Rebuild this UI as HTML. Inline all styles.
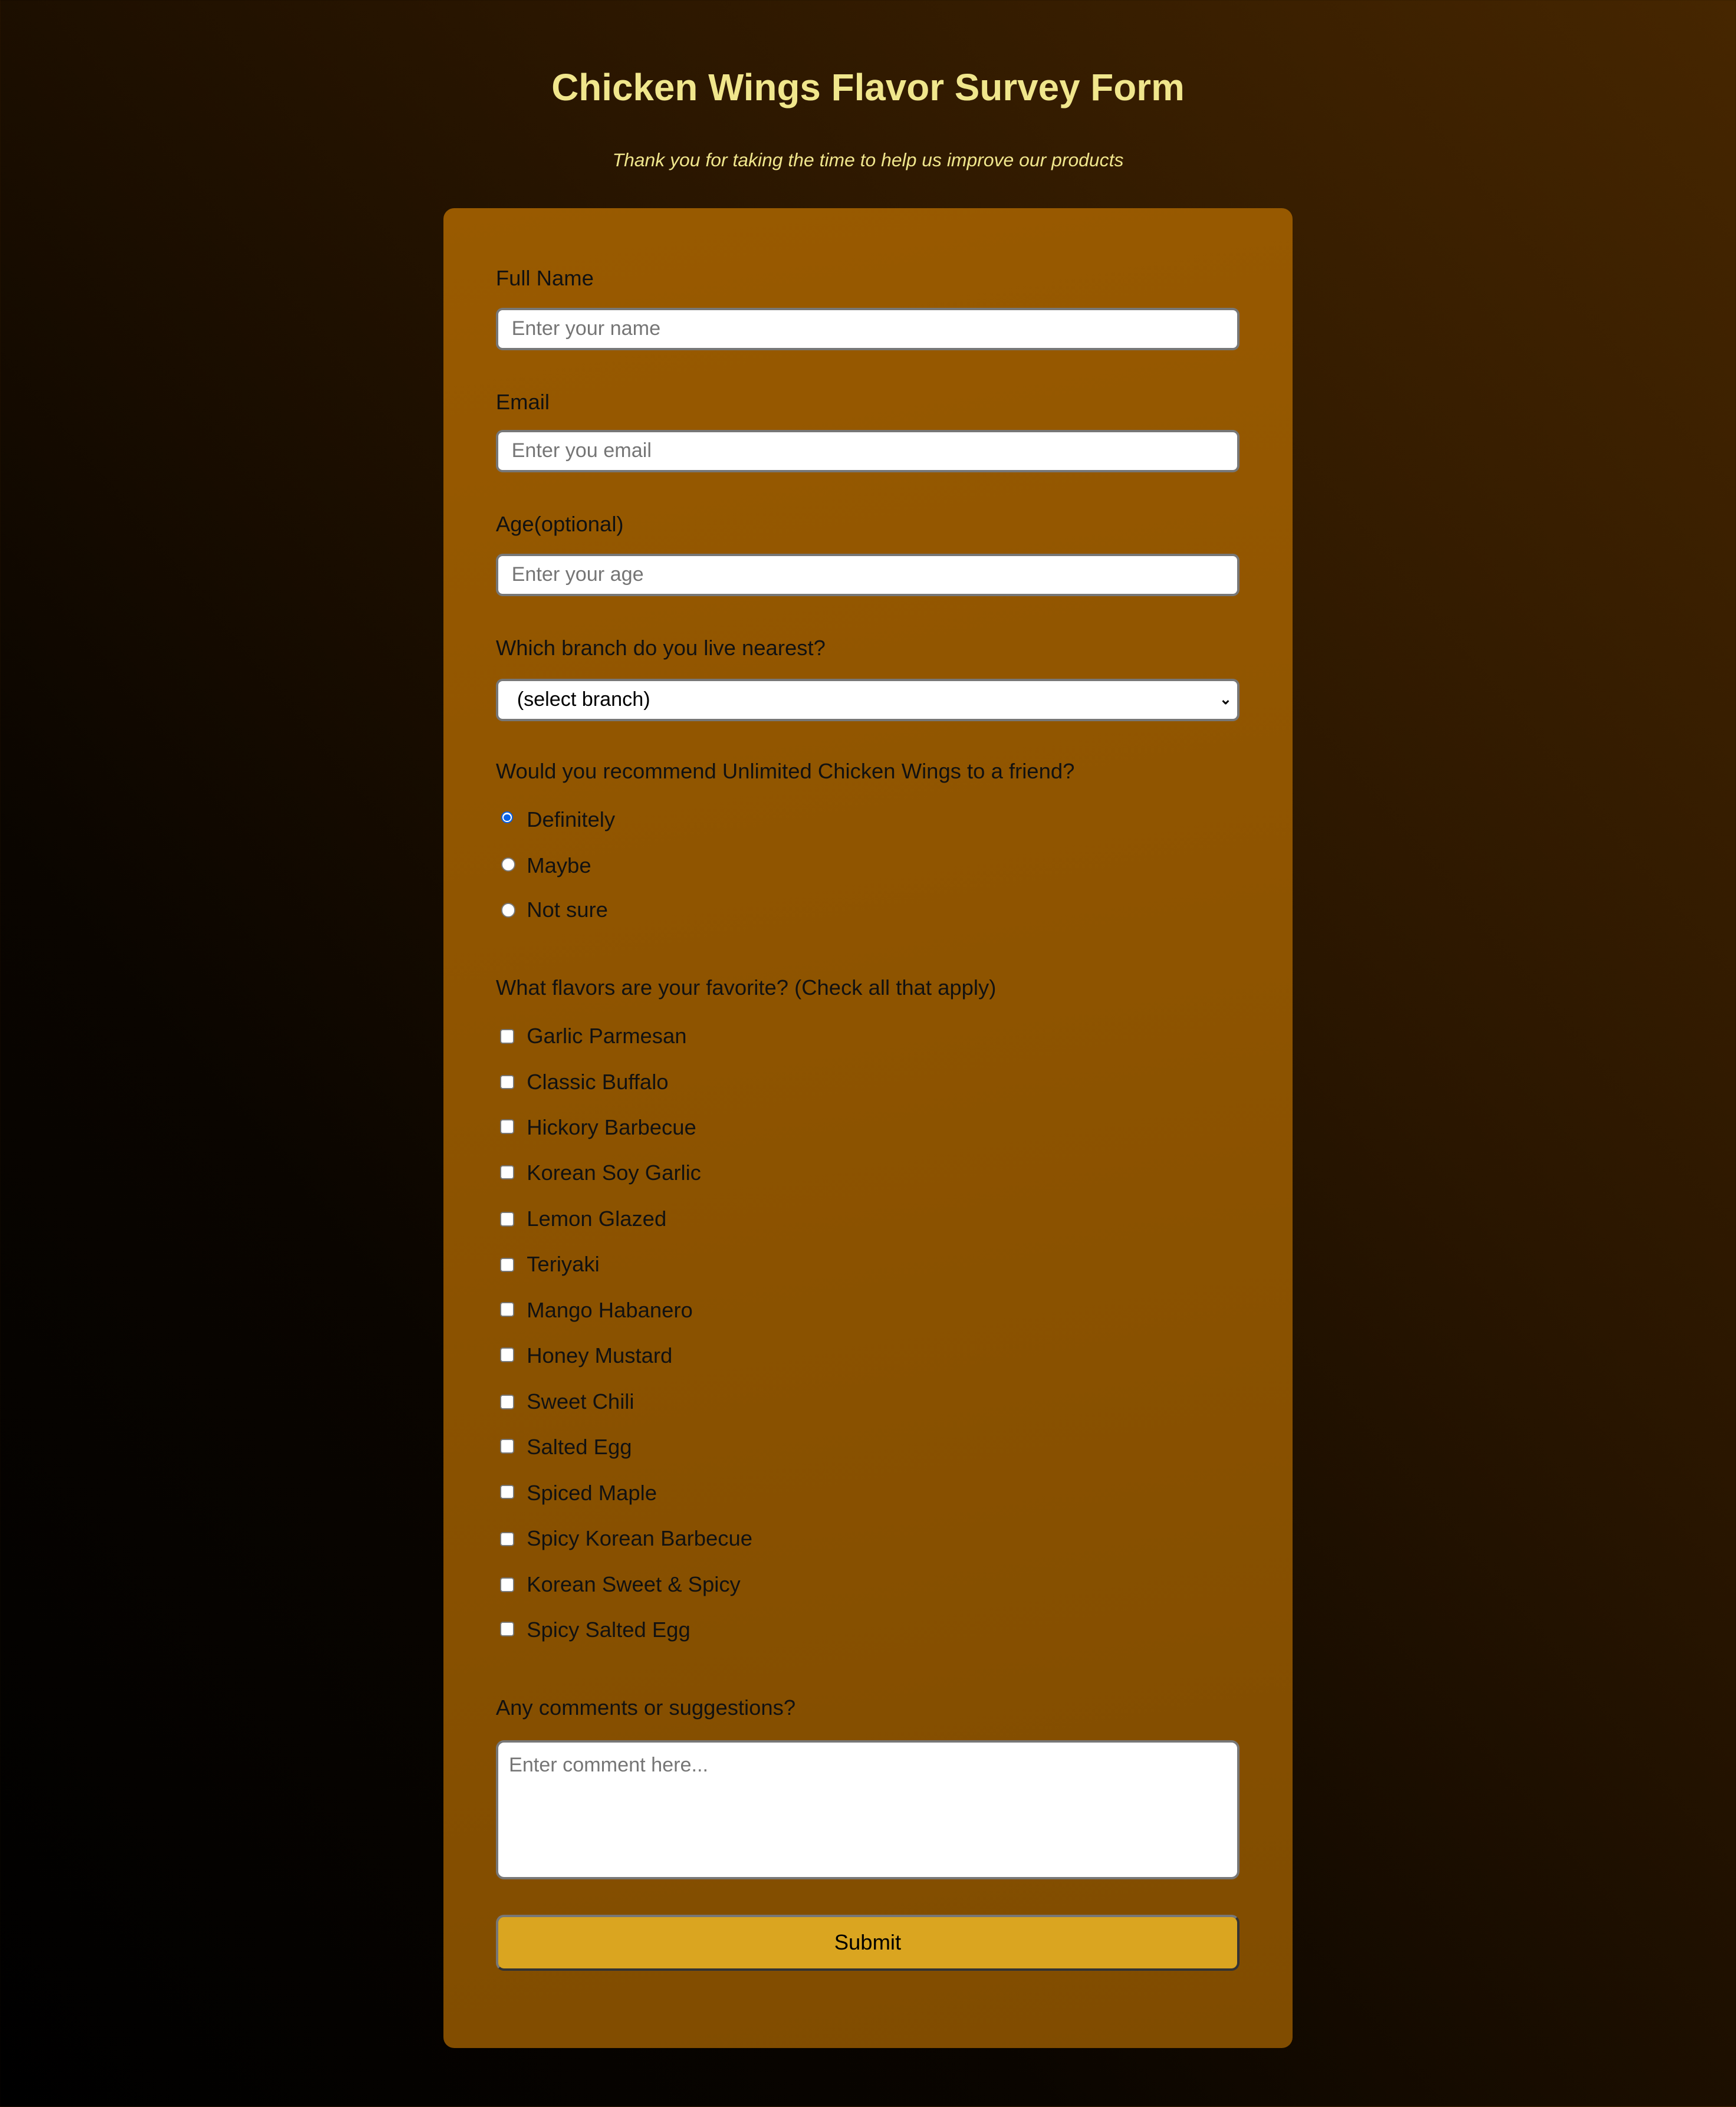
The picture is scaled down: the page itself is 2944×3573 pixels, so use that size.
<!DOCTYPE html>
<html><head><meta charset="utf-8"><style>
html,body{margin:0;padding:0}
body{width:2944px;height:3572px;overflow:hidden;background:linear-gradient(to top right,#000 0%,#0a0500 30%,#2a1600 65%,#462600 100%);font-family:"Liberation Sans",Arial,sans-serif}
#w{position:absolute;left:0;top:0;width:1292px;height:1568px;zoom:2.27864;}
.a{position:absolute}
h1{position:absolute;left:0;width:1292px;top:47px;margin:0;text-align:center;font-size:28px;font-weight:bold;color:#f0e68c;line-height:36px}
.sub{left:0;width:1292px;top:110px;text-align:center;font-style:italic;font-size:14px;color:#f0e68c;line-height:18px}
.card{left:330px;top:155px;width:632px;height:1369px;border-radius:8px;background:linear-gradient(170deg,#995a00,#804c00)}
.lb{left:369px;font-size:16px;color:#111;line-height:20px}
.in{left:369px;width:550px;height:28px;background:#fff;border:2px solid #777;border-radius:5px;font-size:15px;color:#757575;line-height:28px;box-sizing:content-box}
.in span{padding-left:10px}
.rad{left:373px;width:9px;height:9px;border:1px solid #777;border-radius:50%;background:#fff}
.chk{left:372px;width:9px;height:9px;border:1px solid #777;border-radius:2px;background:#fff}
.opt{left:392px;font-size:16px;color:#111;line-height:20px}
</style></head><body><div id="w">
<h1>Chicken Wings Flavor Survey Form</h1>
<div class="a sub">Thank you for taking the time to help us improve our products</div>
<div class="a card"></div>
<div class="a lb" style="top:197px">Full Name</div>
<div class="a in" style="top:229px"><span>Enter your name</span></div>
<div class="a lb" style="top:289px">Email</div>
<div class="a in" style="top:320px"><span>Enter you email</span></div>
<div class="a lb" style="top:380px">Age(optional)</div>
<div class="a in" style="top:412px"><span>Enter your age</span></div>
<div class="a lb" style="top:472px">Which branch do you live nearest?</div>
<div class="a in" style="top:505px;color:#000"><span style="padding-left:14px">(select branch)</span><span style="position:absolute;right:4px;top:0;font-size:11px;font-weight:bold">&#8964;</span></div>
<div class="a lb" style="top:564px">Would you recommend Unlimited Chicken Wings to a friend?</div>
<div class="a rad" style="top:604px;border:1px solid #0a63e8;width:7px;height:7px;background:#fff;box-shadow:inset 0 0 0 1px #fff;"><div style="position:absolute;left:1px;top:1px;width:5px;height:5px;border-radius:50%;background:#0a63e8"></div></div>
<div class="a opt" style="top:600px">Definitely</div>
<div class="a rad" style="top:638px"></div><div class="a opt" style="top:634px">Maybe</div>
<div class="a rad" style="top:672px"></div><div class="a opt" style="top:667px">Not sure</div>
<div class="a lb" style="top:725px">What flavors are your favorite? (Check all that apply)</div>
<div class="a chk" style="top:766px"></div><div class="a opt" style="top:761px">Garlic Parmesan</div>
<div class="a chk" style="top:800px"></div><div class="a opt" style="top:795px">Classic Buffalo</div>
<div class="a chk" style="top:833px"></div><div class="a opt" style="top:829px">Hickory Barbecue</div>
<div class="a chk" style="top:867px"></div><div class="a opt" style="top:863px">Korean Soy Garlic</div>
<div class="a chk" style="top:902px"></div><div class="a opt" style="top:897px">Lemon Glazed</div>
<div class="a chk" style="top:936px"></div><div class="a opt" style="top:931px">Teriyaki</div>
<div class="a chk" style="top:969px"></div><div class="a opt" style="top:965px">Mango Habanero</div>
<div class="a chk" style="top:1003px"></div><div class="a opt" style="top:999px">Honey Mustard</div>
<div class="a chk" style="top:1038px"></div><div class="a opt" style="top:1033px">Sweet Chili</div>
<div class="a chk" style="top:1071px"></div><div class="a opt" style="top:1067px">Salted Egg</div>
<div class="a chk" style="top:1105px"></div><div class="a opt" style="top:1101px">Spiced Maple</div>
<div class="a chk" style="top:1140px"></div><div class="a opt" style="top:1135px">Spicy Korean Barbecue</div>
<div class="a chk" style="top:1174px"></div><div class="a opt" style="top:1169px">Korean Sweet &amp; Spicy</div>
<div class="a chk" style="top:1207px"></div><div class="a opt" style="top:1203px">Spicy Salted Egg</div>
<div class="a lb" style="top:1261px">Any comments or suggestions?</div>
<div class="a in" style="top:1295px;height:100px;line-height:18px;border-radius:6px"><div style="padding:8px 8px;font-size:15px">Enter comment here...</div></div>
<div class="a" style="left:369px;top:1425px;width:550px;height:38px;background:#daa520;border:2px solid #333;border-top-color:#777;border-left-color:#777;border-radius:6px;text-align:center;line-height:38px;font-size:16px;color:#000">Submit</div>
</div></body></html>
